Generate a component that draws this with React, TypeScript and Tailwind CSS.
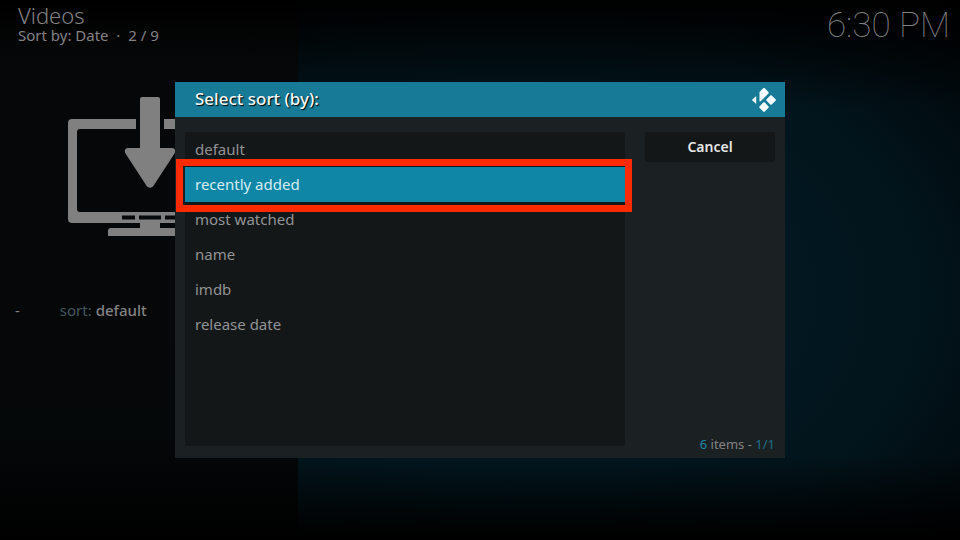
import { useState } from "react";

const sortOptions = [
  "default",
  "recently added",
  "most watched",
  "name",
  "imdb",
  "release date",
];

function DownloadScreenIcon() {
  return (
    <svg viewBox="0 0 166 140" className="w-[166px] h-[140px]" fill="#808080" aria-hidden="true">
      {/* screen frame, open at the top where the arrow enters */}
      <path d="M69 22H5a4 4 0 0 0-4 4v96a4 4 0 0 0 4 4h156a4 4 0 0 0 4-4V26a4 4 0 0 0-4-4H97v10h56a3 3 0 0 1 3 3v77a3 3 0 0 1-3 3H13a3 3 0 0 1-3-3V35a3 3 0 0 1 3-3h56z" />
      <path d="M55 118.500h13v4H55zM72 118.500h22v4H72zM98 118.500h13v4H98z" fill="#07090a" />
      <path d="M73 126h20v5h29a3 3 0 0 1 3 3v5H41v-5a3 3 0 0 1 3-3h29z" />
      <path d="M75 0h16a2 2 0 0 1 2 2v49h12c3 0 4 3 2.500 5.500L87 88c-2 3.500-6 3.500-8 0L58.500 56.500C57 54 58 51 61 51h12V2a2 2 0 0 1 2-2z" />
    </svg>
  );
}

function KodiLogo() {
  return (
    <svg viewBox="0 0 24 24" className="w-6 h-6" fill="#f4fcff" aria-hidden="true">
      <path d="M7.500 4 11.200.3q.8-.7 1.600 0l3.600 3.700q.6.700 0 1.400L8.700 13.200q-1.200 1-1.200-.5z" />
      <path d="M4.200 7.900v8.200L.4 12.600q-.6-.6 0-1.200z" />
      <path d="m14.600 11.300 3.700-3.700q.7-.7 1.400 0l3.900 3.700q.6.700 0 1.400l-3.900 3.800q-.7.700-1.400 0l-3.700-3.800q-.7-.7 0-1.400z" />
      <path d="m7.500 18.400 3.700-3.800q.8-.7 1.600 0l3.700 3.800q.6.700 0 1.400l-3.700 3.800q-.8.700-1.600 0l-3.700-3.800q-.6-.7 0-1.400z" />
    </svg>
  );
}

export default function App() {
  const [selected, setSelected] = useState("recently added");
  const [open, setOpen] = useState(true);

  return (
    <div className="relative min-h-screen flex bg-black overflow-hidden text-[15px] leading-5 text-[#828282] font-['Noto_Sans','Open_Sans',sans-serif]">
      {/* Side panel */}
      <aside className="w-[298px] shrink-0 bg-[linear-gradient(to_bottom,#000,#060708_12%,#050809_80%,#000)]">
        <header className="pl-[18px] pt-[3px]">
          <h1 className="text-[22px] leading-6 font-light">Videos</h1>
          <p className="whitespace-pre leading-4">Sort by: Date  ·  2 / 9</p>
        </header>

        <div className="pl-[67px] pt-[54px]">
          <DownloadScreenIcon />
        </div>

        <div className="pl-[15px] pt-[63px] flex gap-10">
          <span>-</span>
          <p>
            <span className="text-[#44565b]">sort:</span>{" "}
            <span className="font-medium">default</span>
          </p>
        </div>
      </aside>

      {/* Main area */}
      <main className="flex-1 flex justify-end items-start pr-[10px] pt-[6px] bg-[linear-gradient(to_bottom,#000,transparent_20%,transparent_84%,#000_99%),radial-gradient(ellipse_at_35%_55%,#021a24,#021720_45%,#02141b_65%,#010b10_84%,#000405)]">
        <time className="text-[35px] leading-10 font-thin font-['Roboto',sans-serif]">6:30 PM</time>
      </main>

      {/* Sort dialog */}
      {open && (
        <div className="absolute inset-0 flex items-center justify-center">
          <section
            role="dialog"
            aria-labelledby="sort-title"
            className="w-[610px] max-w-full bg-[#1b2123]"
          >
            <div className="h-[35px] pl-5 pr-[9px] flex items-center justify-between bg-[#177a96]">
              <h2
                id="sort-title"
                className="text-[17px] font-medium pb-0.5 text-[#f2f8fa] [text-shadow:1px_1px_1px_#000]"
              >
                Select sort (by):
              </h2>
              <KodiLogo />
            </div>

            <div className="px-[10px] pt-[15px] pb-1 flex gap-5">
              <ul className="flex-1 h-[314px] mb-2 bg-[#141718] rounded-xs">
                {sortOptions.map((option) => (
                  <li key={option} className="relative">
                    <button
                      onClick={() => setSelected(option)}
                      className={
                        option === selected
                          ? "block w-full h-[35px] px-[10px] pb-0.5 text-left bg-[#0f86a6] text-[#d5edf3]"
                          : "block w-full h-[35px] px-[10px] pb-0.5 text-left text-[#929394]"
                      }
                    >
                      {option}
                    </button>
                    {option === selected && (
                      <span className="absolute z-10 -top-2 -left-[9px] -right-[7px] -bottom-[10px] border-7 border-[#ff2a00] pointer-events-none" />
                    )}
                  </li>
                ))}
              </ul>

              <div className="w-[130px] flex flex-col justify-between">
                <button
                  onClick={() => setOpen(false)}
                  className="h-[30px] rounded-xs bg-[#141718] text-sm font-semibold text-[#e6e6e6]"
                >
                  Cancel
                </button>
                <p className="text-right text-[13px] leading-4 pb-0.5">
                  <span className="text-[#1e87a5]">6</span> items -{" "}
                  <span className="text-[#1d6f88]">1/1</span>
                </p>
              </div>
            </div>
          </section>
        </div>
      )}
    </div>
  );
}
